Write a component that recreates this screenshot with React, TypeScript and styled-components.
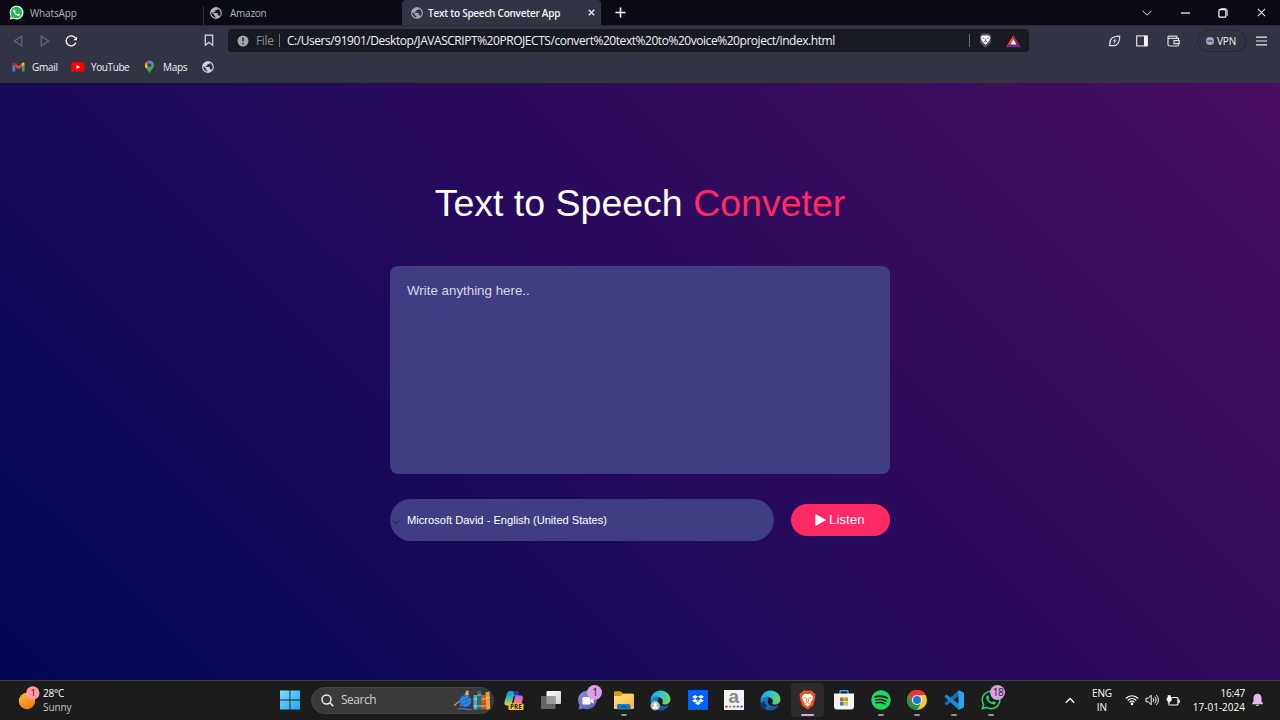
import React from "react";
import styled, { createGlobalStyle } from "styled-components";
import { FaWhatsapp, FaSpotify, FaDropbox } from "react-icons/fa";
import { MdPublic } from "react-icons/md";

const GlobalStyle = createGlobalStyle`
  * { box-sizing: border-box; }
  html, body { margin: 0; padding: 0; }
  body {
    width: 1280px;
    height: 720px;
    overflow: hidden;
    font-family: "Open Sans", "Noto Sans", sans-serif;
  }
  svg { display: block; flex: none; }
`;

const Desktop = styled.div`
  display: flex;
  flex-direction: column;
  width: 1280px;
  height: 720px;
  overflow: hidden;
`;

/* ---------- Browser chrome ---------- */

const TabStrip = styled.div`
  display: flex;
  flex: none;
  height: 25px;
  background: #0b0b16;
`;

const Tab = styled.div<{ $active?: boolean; $width: number; $divider?: boolean }>`
  display: flex;
  align-items: center;
  width: ${(p) => p.$width}px;
  height: 25px;
  padding-left: ${(p) => (p.$divider ? 9 : 8)}px;
  gap: 5px;
  border-radius: ${(p) => (p.$active ? "4px 4px 0 0" : "0")};
  background: ${(p) => (p.$active ? "#323443" : "transparent")};
  color: ${(p) => (p.$active ? "#f4f4f8" : "#b4b4bb")};
  background-image: ${(p) =>
    p.$divider ? "linear-gradient(#33343f, #33343f)" : "none"};
  background-repeat: no-repeat;
  background-size: 1px 19px;
  background-position: 0 6px;
`;

const Label = styled.span<{
  $size: number;
  $spacing?: number;
  $weight?: number;
  $color?: string;
}>`
  font-size: ${(p) => p.$size}px;
  letter-spacing: ${(p) => p.$spacing ?? 0}px;
  font-weight: ${(p) => p.$weight ?? 400};
  color: ${(p) => p.$color ?? "inherit"};
  line-height: 14px;
  white-space: nowrap;
`;

const TabClose = styled.span`
  display: flex;
  margin-left: auto;
  margin-right: 6px;
`;

const NewTab = styled.div`
  display: flex;
  align-items: center;
  justify-content: center;
  width: 38px;
`;

const WindowControls = styled.div`
  display: flex;
  align-items: center;
  margin-left: auto;
`;

const Cell = styled.div<{ $width: number }>`
  display: flex;
  align-items: center;
  justify-content: center;
  flex: none;
  width: ${(p) => p.$width}px;
`;

const Toolbar = styled.div`
  display: flex;
  align-items: center;
  flex: none;
  height: 30px;
  padding-left: 5px;
  background: #323443;
  border-top: 1px solid #272834;
`;

const BookmarkToggle = styled.div`
  display: flex;
  justify-content: center;
  width: 20px;
  margin-left: 114px;
  margin-right: 9px;
`;

const AddressBar = styled.div`
  display: flex;
  align-items: center;
  width: 801px;
  height: 23px;
  padding: 0 3px 0 9px;
  border-radius: 4px;
  background: #181a21;
`;

const Scheme = styled.div`
  display: flex;
  align-items: center;
  flex: none;
  width: 42px;
  gap: 7px;
`;

const BarRule = styled.span`
  width: 1px;
  height: 13px;
  background: #6d6f79;
`;

const ShieldArea = styled.div`
  display: flex;
  align-items: center;
  margin-left: auto;
`;

const Extensions = styled.div`
  display: flex;
  align-items: center;
  margin-left: 73px;
`;

const VpnPill = styled.div`
  display: flex;
  align-items: center;
  gap: 3px;
  width: 50px;
  height: 22px;
  margin-left: 5px;
  padding-left: 8px;
  border: 1px solid #262733;
  border-radius: 11px;
  background: #31333f;
`;

const BookmarkBar = styled.div`
  display: flex;
  flex: none;
  height: 28px;
  padding: 5px 0 0 12px;
  background: #323443;
  color: #f0f0f4;
`;

const Bookmark = styled.div<{ $width: number }>`
  display: flex;
  align-items: center;
  height: 14px;
  width: ${(p) => p.$width}px;
`;

const BookmarkIcon = styled.span<{ $width: number }>`
  display: flex;
  width: ${(p) => p.$width}px;
`;

/* ---------- Page ---------- */

const Page = styled.main`
  display: flex;
  flex-direction: column;
  align-items: center;
  flex: 1;
  background: linear-gradient(45deg, #010758, #490d61);
  font-family: "Liberation Sans", Arial, sans-serif;
  color: #fff;
`;

const Title = styled.h1`
  margin: 99px 0 0;
  font-size: 37.5px;
  font-weight: 400;
  line-height: 43px;
  white-space: nowrap;

  span {
    color: #ff2963;
  }
`;

const TextArea = styled.textarea`
  display: block;
  width: 500px;
  height: 208px;
  margin: 41px 0 25px;
  padding: 17px;
  border: 0;
  outline: 0;
  border-radius: 8px;
  resize: none;
  background: #403d84;
  color: #fff;
  font: 13.33px/16px "Liberation Sans", Arial, sans-serif;

  &::placeholder {
    color: #d9d8e8;
    opacity: 1;
  }
`;

const Controls = styled.div`
  display: flex;
  align-items: center;
  gap: 17px;
  width: 500px;
`;

const VoiceSelect = styled.div`
  display: flex;
  align-items: center;
  flex: 1;
  height: 42px;
  padding-left: 2px;
  gap: 7px;
  border-radius: 21px;
  background: #403d84;
  font-size: 11.11px;
  white-space: nowrap;

  svg {
    margin-top: 3px;
  }
`;

const ListenButton = styled.button`
  display: flex;
  align-items: center;
  width: 99px;
  height: 32px;
  padding: 0 0 0 24px;
  gap: 3px;
  border: 0;
  border-radius: 16px;
  background: #ff2963;
  color: #fff;
  font: 13.33px/16px "Liberation Sans", Arial, sans-serif;
`;

/* ---------- Taskbar ---------- */

const Taskbar = styled.footer`
  display: flex;
  flex: none;
  height: 40px;
  padding-bottom: 1px;
  border-top: 1px solid #3d3b48;
  background: #1c1c1c;
  color: #fff;
`;

const Weather = styled.div`
  display: flex;
  align-items: center;
  width: 275px;
  padding-left: 17px;
  gap: 3px;

  svg {
    margin-top: -5px;
  }
`;

const Stack = styled.div<{ $align: string }>`
  display: flex;
  flex-direction: column;
  align-items: ${(p) => p.$align};
`;

const SearchBox = styled.div`
  display: flex;
  align-items: center;
  align-self: center;
  width: 183px;
  height: 27px;
  margin: 0 2px 0 6px;
  padding: 0 2px 0 9px;
  border: 1px solid #454545;
  border-radius: 14px;
  background: #3a3a3a;

  > span {
    margin: 0 auto 0 7px;
  }
`;

const AppSlot = styled.div`
  display: flex;
  justify-content: center;
  align-items: center;
  flex: none;
  position: relative;
  width: 36.65px;
  height: 38px;
`;

const AppTile = styled.div<{ $active?: boolean }>`
  display: flex;
  align-items: center;
  justify-content: center;
  width: 33px;
  height: 34px;
  border-radius: 4px;
  background: ${(p) => (p.$active ? "#2b2b2b" : "transparent")};
`;

const RunMark = styled.span<{ $active?: boolean }>`
  position: absolute;
  bottom: 3px;
  width: ${(p) => (p.$active ? 13 : 6)}px;
  height: 2.5px;
  border-radius: 2px;
  background: ${(p) => (p.$active ? "#dba4e0" : "#929292")};
`;

const Badge = styled.span`
  position: absolute;
  top: 4px;
  right: 3.5px;
  width: 15px;
  height: 15px;
  border-radius: 50%;
  background: #d9a0e3;
  color: #1d1420;
  font-size: 10px;
  line-height: 15px;
  letter-spacing: -0.4px;
  text-align: center;
`;

const Tray = styled.div`
  display: flex;
  align-items: center;
  margin-left: auto;
  padding-right: 16px;
`;

const Clock = styled.div`
  display: flex;
  flex-direction: column;
  align-items: flex-end;
  width: 61px;
  margin-right: 6px;
`;

/* ---------- Icons ---------- */

const line = { fill: "none", stroke: "#dcdde4", strokeWidth: 1.2 } as const;

const WhatsAppTabIcon = () => (
  <svg width="17" height="16" viewBox="0 0 17 16">
    <path d="M1.700 14.600 2.700 11.200A6.900 6.900 0 1 1 5.400 13.700Z" fill="#fff" />
    <path d="M3 13.200 3.700 11A5.800 5.800 0 1 1 5.500 12.600Z" fill="#20b954" />
    <path
      d="M6.200 4.200c-.8.3-1.200 1.200-.8 2.300.6 1.900 2.200 3.600 4.300 4.300 1.100.3 2.200-.3 2.400-1.300L10.300 8.500 9.400 9.400C8.400 9 7.500 8.200 7 7.200L7.700 6.300Z"
      fill="#fff"
    />
  </svg>
);

const CloseIcon = ({ size = 8, width = 1.5, color = "#e9e9ef" }) => (
  <svg width={size} height={size} viewBox="0 0 8 8">
    <path d="M.8.8 7.200 7.200M7.200.8.8 7.200" stroke={color} strokeWidth={width} />
  </svg>
);

const LionShield = () => (
  <svg width="13" height="15" viewBox="0 0 13 15">
    <path d="M3.200.500h6.600l2.400 2.200-.4 7L6.500 14.500 1.200 9.700l-.4-7Z" fill="#565863" />
    <path
      d="M3.800 2.500h5.400L11.300 4 10.300 7.500 8.600 9.600 6.500 11.700 4.400 9.600 2.700 7.500 1.700 4Z"
      fill="#fff"
    />
    <path
      d="M3.400 4.800 5.400 5.700M9.600 4.800 7.600 5.700M6.500 6V8M4.900 8l1.600.9L8.100 8"
      fill="none"
      stroke="#565863"
      strokeWidth={0.9}
    />
  </svg>
);

const BatIcon = () => (
  <svg width="15" height="14" viewBox="0 0 15 14">
    <path d="M7.500.8 0 13.200 7.500 8Z" fill="#ff4724" />
    <path d="M7.500.8 15 13.200 7.500 8Z" fill="#9e1f63" />
    <path d="M0 13.200H15L7.500 8Z" fill="#662d91" />
    <path d="M7.500 5 10.300 10.400H4.700Z" fill="#fff" />
  </svg>
);

const GmailIcon = () => (
  <svg width="13" height="10" viewBox="0 0 13 10">
    <path d="M.5 1.500V9.500H3.200V4Z" fill="#4285f4" />
    <path d="M12.500 1.500V9.500H9.800V4Z" fill="#34a853" />
    <path d="M3.200 1.300 6.500 4 9.800 1.300V4.700L6.500 7.300 3.200 4.700Z" fill="#ea4335" />
    <path d="M.5 2.600V1.700C.5.3 2 0 3.200 1.200V4.700Z" fill="#c5221f" />
    <path d="M12.500 2.600V1.700C12.500.3 11 0 9.800 1.200V4.700Z" fill="#fbbc04" />
  </svg>
);

const YouTubeIcon = () => (
  <svg width="14" height="10" viewBox="0 0 14 10">
    <rect x=".3" y=".2" width="13.200" height="9.500" rx="2.200" fill="#f00" />
    <path d="M5.500 3 9.300 5 5.500 7Z" fill="#fff" />
  </svg>
);

const MapsIcon = () => (
  <svg width="11" height="14" viewBox="0 0 11 14">
    <path d="M5.500 13.500C4.900 10.500.9 8.800.9 5.300A4.600 4.600 0 0 1 10.100 5.300C10.100 8.800 6.100 10.500 5.500 13.500Z" fill="#34a853" />
    <path d="M2 8.400C1.300 7.400.9 6.500.9 5.300 .9 4.100 1.300 3.100 2 2.300L5.500 5.300Z" fill="#fbbc04" />
    <path d="M2 2.300A4.600 4.600 0 0 1 4.200.9L7 3.600 4 7Z" fill="#ea4335" />
    <path d="M4.100.9A4.600 4.600 0 0 1 9.200 2.600L6.200 6Z" fill="#4285f4" />
    <circle cx="5.500" cy="5.200" r="1.700" fill="#263c72" />
  </svg>
);

const WeatherIcon = () => (
  <svg width="23" height="27" viewBox="0 0 23 27">
    <defs>
      <linearGradient id="sun" x1="0" y1="0" x2=".6" y2="1">
        <stop offset="0" stopColor="#f9bd3b" />
        <stop offset="1" stopColor="#f07c13" />
      </linearGradient>
    </defs>
    <circle cx="10" cy="17" r="8.200" fill="url(#sun)" />
    <circle cx="15.800" cy="9" r="6.700" fill="#ff99a4" />
    <text x="13.500" y="12.400" fontSize="9.500" fill="#3a1d22">
      1
    </text>
  </svg>
);

const StartIcon = () => (
  <svg width="20" height="20" viewBox="0 0 20 20">
    <defs>
      <linearGradient id="win" x1="0" y1="0" x2="20" y2="20" gradientUnits="userSpaceOnUse">
        <stop offset="0" stopColor="#80e0ff" />
        <stop offset="1" stopColor="#1ca4f0" />
      </linearGradient>
    </defs>
    <path d="M0 .5H9.500V9.600H0ZM10.400.5H20V9.600H10.400ZM0 10.400H9.500V19.500H0ZM10.400 10.400H20V19.500H10.400Z" fill="url(#win)" />
  </svg>
);

const SearchArt = () => (
  <svg width="39" height="22" viewBox="-1 0 39 22">
    <path d="M1 16.500 16 5M7.500 17 14 1.500" stroke="#d59866" strokeWidth="1.100" />
    <circle cx="12.300" cy="12" r="6" fill="#2275d2" />
    <path d="M8 11 15 7M8.500 14 18 10M11 17 18 13" stroke="#5ba8f2" strokeWidth=".7" />
    <path d="M5 20.500C9 17.500 12 21.500 18.500 20.300" fill="none" stroke="#3d83d8" strokeWidth="1.200" />
    <path d="m12.500 5 2-3.500L16 2.500l-1.500 4" fill="#e8b185" />
    <rect x="20.500" y="6" width="3.800" height="14.500" fill="#52a9c9" />
    <rect x="24.300" y="2" width="4" height="18.500" fill="#256c7d" />
    <rect x="28.300" y="6" width="4.500" height="14.500" fill="#c8571f" />
    <path d="m32.500 3.500 4-1 .7 17.500-4 .7Z" fill="#f0a238" />
    <path d="M24.300 6h4M24.300 17h4M28.300 10h4.500M28.300 17h4.500M32.800 9l4-.5M20.500 10h3.800M20.500 17h3.800" stroke="#eddb9a" strokeWidth=".8" />
  </svg>
);

const CopilotIcon = () => (
  <svg width="20" height="20" viewBox="0 0 20 20" overflow="visible">
    <defs>
      <linearGradient id="cpA" x1="0" y1="0" x2="0" y2="1">
        <stop offset="0" stopColor="#1b8ef0" />
        <stop offset=".5" stopColor="#36bda2" />
        <stop offset="1" stopColor="#f0d02f" />
      </linearGradient>
      <linearGradient id="cpB" x1="0" y1="0" x2="0" y2="1">
        <stop offset="0" stopColor="#b16af0" />
        <stop offset=".5" stopColor="#f36a9a" />
        <stop offset="1" stopColor="#ff9657" />
      </linearGradient>
    </defs>
    <path d="M5.500 1H12C14 1 14.200 3 15 5.500L10.500 6 8.500 12C8 14.500 7 15.500 5 15.500H3C.5 15.500 0 13.500.7 11L3 3.500C3.500 2 4.200 1 5.500 1Z" fill="url(#cpA)" />
    <path d="M9 1h3.500c1.700 0 2 2 2.800 4.500h-5Z" fill="#173db7" />
    <path d="M12.500 5.500H16.500C19 5.500 19.300 7.500 18.700 9.500L17 15H8.500L11 7C11.300 6 11.800 5.500 12.500 5.500Z" fill="url(#cpB)" />
    <path d="M9.500 6.500 11.200 6 9.300 12.500 8 13Z" fill="#1c1c1c" />
    <rect x="4.500" y="13.500" width="15" height="6.500" rx="1" fill="#ffc51f" />
    <text x="6" y="19.100" fontSize="6.200" fontWeight="700" letterSpacing=".2" fill="#2c2105">
      PRE
    </text>
  </svg>
);

const TaskViewIcon = () => (
  <svg width="20" height="20" viewBox="0 0 20 20">
    <defs>
      <linearGradient id="tv" x1="0" y1="0" x2="1" y2="1">
        <stop offset="0" stopColor="#fff" />
        <stop offset="1" stopColor="#cfcfcf" />
      </linearGradient>
    </defs>
    <rect x="5.500" y="1" width="14.500" height="13" rx="1" fill="url(#tv)" />
    <rect x="0" y="6" width="14.500" height="13" rx="1" fill="#666" />
    <path d="M5.500 6h9v8h-9Z" fill="#9b9b9b" />
  </svg>
);

const ChatIcon = () => (
  <svg width="20" height="20" viewBox="0 0 20 20">
    <defs>
      <linearGradient id="ch" x1="0" y1="0" x2="1" y2="1">
        <stop offset="0" stopColor="#9591e8" />
        <stop offset="1" stopColor="#5059b9" />
      </linearGradient>
    </defs>
    <path d="M.5 19.500 1.500 15A9.300 9.300 0 1 1 5.500 18.500Z" fill="url(#ch)" />
    <rect x="4.500" y="7" width="8" height="7.500" rx="1.300" fill="#fff" />
    <path d="m12.700 9.700 3-2v6l-3-2Z" fill="#fff" />
  </svg>
);

const FolderIcon = () => (
  <svg width="20" height="20" viewBox="0 0 20 20">
    <defs>
      <linearGradient id="fo" x1="0" y1="0" x2="1" y2="1">
        <stop offset="0" stopColor="#ffe28a" />
        <stop offset="1" stopColor="#f5b92c" />
      </linearGradient>
    </defs>
    <path d="M0 2.500C0 1.500.7 1.200 1.500 1.200H6.500L9 3.500H18.500C19.500 3.500 20 4 20 5V8H0Z" fill="#d99813" />
    <path d="M0 6H6.500L9 4H18.500C19.500 4 20 4.500 20 5.500V18C20 18.700 19.500 19 19 19H1C.4 19 0 18.700 0 18Z" fill="url(#fo)" />
    <path d="M3 19.500V16C3 14.500 4 14 5 14H14.500C16 14 16.500 15 16.500 16V19.500Z" fill="#197bc2" />
    <path d="M6.500 16.700H13" stroke="#0c4e82" strokeWidth="1.200" />
  </svg>
);

const EdgeIcon = ({ id, profile }: { id: string; profile?: boolean }) => (
  <svg width="21" height="21" viewBox="0 0 21 21">
    <defs>
      <linearGradient id={id + "t"} x1="0" y1="0" x2="1" y2=".3">
        <stop offset="0" stopColor="#259fe2" />
        <stop offset=".6" stopColor="#39c6c4" />
        <stop offset="1" stopColor="#65d56d" />
      </linearGradient>
      <linearGradient id={id + "b"} x1="0" y1="0" x2="1" y2="1">
        <stop offset="0" stopColor="#1b8cd8" />
        <stop offset="1" stopColor="#114a8b" />
      </linearGradient>
    </defs>
    <path d="M.5 10.500C1 4 5.500.5 10.500.5 16.500.5 20.500 5 20.500 9.500 20.500 13 17.500 14.500 15 14.500 12.500 14.500 11.800 13.500 12.600 12.500 13.600 10 11.500 7 7.500 7 4 7 1.500 8.500.5 10.500Z" fill={`url(#${id}t)`} />
    <path d="M.5 10.500C1.500 8 4.500 6 7.800 6.500 10 7 8 8.500 7.800 11 7.500 15 12 17.800 19 15 17.500 18.500 14 20.500 10.500 20.500 5 20.500.5 16 .5 10.500Z" fill={`url(#${id}b)`} />
    {profile ? (
      <g>
        <circle cx="5.200" cy="15.800" r="4.700" fill="#b6b9bd" />
        <circle cx="5.200" cy="14.200" r="1.500" fill="#fff" />
        <path d="M2.500 18.500c0-3.200 5.400-3.200 5.400 0Z" fill="#fff" />
      </g>
    ) : (
      <path d="m0 15 2.500-3 2-1.500.5 3.500 2 1-1.500 3.500H2Z" fill="#0a386f" />
    )}
  </svg>
);

const DropboxIcon = () => (
  <svg width="20" height="20" viewBox="0 0 20 20">
    <rect width="20" height="20" fill="#0061fe" />
    <g transform="translate(4 4)">
      <FaDropbox size={12} color="#fff" />
    </g>
  </svg>
);

const AmazonIcon = () => (
  <svg width="20" height="20" viewBox="0 0 20 20" overflow="visible">
    <rect width="20" height="20" fill="#f2f2f2" />
    <text x="4.600" y="13" fontSize="19" fontWeight="700" fill="#888" fontFamily="Liberation Sans, sans-serif">
      a
    </text>
    {["#e22c2c", "#e8862a", "#4ba64a", "#2b7cd3", "#8a41b0"].map((c, i) => (
      <circle key={c} cx={2.5 + i * 3.8} cy="16.600" r="1.200" fill={c} />
    ))}
  </svg>
);

const BraveIcon = () => (
  <svg width="17" height="20" viewBox="0 0 17 20">
    <path d="M4.500.5h8L14.500 2.500 16.500 4 16 9 14 15.500 8.500 19.500 3 15.500 1 9 .5 4 2.500 2.500Z" fill="#f4501e" />
    <path d="M5.500 3.800 8.500 4.300 11.500 3.800 14 6.500 13.300 10 11.500 12.800V14.200L8.500 16.500 5.500 14.200V12.800L3.700 10 3 6.500Z" fill="#fff" />
    <path
      d="M4.800 7.500 7.300 8.300M12.200 7.500 9.700 8.300M7.600 8.500 7.300 11.200 8.500 12.200 9.700 11.200 9.400 8.500M6.300 13.600l2.200-1.100 2.200 1.100"
      fill="none"
      stroke="#f4501e"
      strokeWidth=".8"
    />
  </svg>
);

const StoreIcon = () => (
  <svg width="20" height="20" viewBox="0 0 20 20">
    <path d="M6 4V1.500C6 1 6.300.8 6.700.8H13.300C13.700.8 14 1 14 1.500V4" fill="none" stroke="#3da8e8" strokeWidth="1.400" />
    <path d="M0 3.500H20V16.500C20 18.500 19 19.500 17 19.500H3C1 19.500 0 18.500 0 16.500Z" fill="#f3f3f3" />
    <path d="M6 7.500h3.700v3.700H6Z" fill="#e8502a" />
    <path d="M10.300 7.500H14v3.700h-3.700Z" fill="#7cb51d" />
    <path d="M6 11.800h3.700v3.700H6Z" fill="#1a8fe0" />
    <path d="M10.300 11.800H14v3.700h-3.700Z" fill="#f5b81c" />
  </svg>
);

const ChromeIcon = () => (
  <svg width="20" height="20" viewBox="0 0 20 20">
    <circle cx="10" cy="10" r="10" fill="#fcc934" />
    <path d="M10 0A10 10 0 0 1 18.660 5H10L5.670 12.500 1.340 5A10 10 0 0 1 10 0Z" fill="#e33b2e" />
    <path d="M1.340 5 5.670 12.500 10 15 14.330 12.500 10 20A10 10 0 0 1 1.340 5Z" fill="#229342" />
    <circle cx="10" cy="10" r="5" fill="#fff" />
    <circle cx="10" cy="10" r="4" fill="#1a73e8" />
  </svg>
);

const VsCodeIcon = () => (
  <svg width="20" height="20" viewBox="0 0 20 20">
    <path d="M14.500.2 19 2.200V6.200L14.500 6.300 2.500 15.500.3 13.500Z" fill="#0b70bc" />
    <path d="M.3 6.500 2.500 4.500 14.500 13.700 19 13.800V17.800L14.500 19.800Z" fill="#1b87d4" />
    <path d="M14.500.2 20 2.700V17.300L14.500 19.800Z" fill="#2aa4ef" />
  </svg>
);

const RunningApp = ({
  children,
  active,
  running,
  badge,
}: {
  children: React.ReactNode;
  active?: boolean;
  running?: boolean;
  badge?: string;
}) => (
  <AppSlot>
    <AppTile $active={active}>{children}</AppTile>
    {(running || active) && <RunMark $active={active} />}
    {badge && <Badge>{badge}</Badge>}
  </AppSlot>
);

const BrowserTabs = () => (
  <TabStrip>
    <Tab $width={203}>
      <WhatsAppTabIcon />
      <Label $size={10} $spacing={-0.15}>WhatsApp</Label>
    </Tab>
    <Tab $width={199} $divider>
      <Cell $width={8}><MdPublic size={14} /></Cell>
      <Cell $width={0} />
      <Label $size={10} $spacing={-0.25}>Amazon</Label>
    </Tab>
    <Tab $width={199} $active>
      <Cell $width={13}><MdPublic size={14} color="#a3a5b0" /></Cell>
      <Label $size={10} $spacing={-0.25} $weight={600}>Text to Speech Conveter App</Label>
      <TabClose><CloseIcon size={7} /></TabClose>
    </Tab>
    <NewTab>
      <svg width="11" height="11" viewBox="0 0 11 11">
        <path d="M5.500.5v10M.5 5.500h10" stroke="#fff" strokeWidth="1.500" />
      </svg>
    </NewTab>
    <WindowControls>
      <Cell $width={38}>
        <svg width="10" height="6" viewBox="0 0 10 6"><path d="M.5.7 5 5.200 9.500.7" {...line} strokeWidth={1} /></svg>
      </Cell>
      <Cell $width={38}>
        <svg width="9" height="2" viewBox="0 0 9 2"><path d="M0 1h9" stroke="#fff" strokeWidth="1.200" /></svg>
      </Cell>
      <Cell $width={38}>
        <svg width="10" height="10" viewBox="0 0 10 10">
          <rect x=".9" y="1.700" width="7" height="7.500" rx="1.300" {...line} stroke="#fff" />
          <path d="M2.500.7H7.200C8.700.7 9.200 1.400 9.200 3V7.800" {...line} stroke="#fff" strokeWidth={0.9} />
        </svg>
      </Cell>
      <Cell $width={38}><CloseIcon size={9} width={0.9} /></Cell>
    </WindowControls>
  </TabStrip>
);

const BrowserToolbar = () => (
  <Toolbar>
    <Cell $width={26.67}>
      <svg width="10" height="12" viewBox="0 0 10 12"><path d="M8.800 1.200V10.800L1.200 6Z" {...line} stroke="#666873" /></svg>
    </Cell>
    <Cell $width={26.67}>
      <svg width="10" height="12" viewBox="0 0 10 12"><path d="M1.200 1.200V10.800L8.800 6Z" {...line} stroke="#666873" /></svg>
    </Cell>
    <Cell $width={26.67}>
      <svg width="13" height="12" viewBox="0 0 13 12">
        <path d="M10.300 3A5 5 0 1 0 10.800 7.800" {...line} stroke="#fff" strokeWidth={1.3} />
        <path d="M12 1.500V5.200H8.300Z" fill="#fff" />
      </svg>
    </Cell>
    <BookmarkToggle>
      <svg width="10" height="13" viewBox="0 0 10 13"><path d="M1.300 1.200H8.700V11.200L5 8.300 1.300 11.200Z" {...line} /></svg>
    </BookmarkToggle>
    <AddressBar>
      <Scheme>
        <svg width="12" height="12" viewBox="0 0 12 12">
          <circle cx="6" cy="6" r="5.500" fill="#a4a6b0" />
          <path d="M6 2.600v4M6 8v1.300" stroke="#181a21" strokeWidth="1.400" />
        </svg>
        <Label $size={12} $spacing={-0.3} $color="#8b8d97">File</Label>
      </Scheme>
      <BarRule />
      <Cell $width={7} />
      <Label $size={12} $color="#f2f3f6" $spacing={-0.45}>
        C:/Users/91901/Desktop/JAVASCRIPT%20PROJECTS/convert%20text%20to%20voice%20project/index.html
      </Label>
      <ShieldArea>
        <BarRule />
        <Cell $width={32}><LionShield /></Cell>
        <Cell $width={24}><BatIcon /></Cell>
      </ShieldArea>
    </AddressBar>
    <Extensions>
      <Cell $width={26}>
        <svg width="13" height="12" viewBox="0 0 13 12">
          <path d="M1 10.800C1.500 10 2 10.300 2 8.500 1.500 3 5.500 1.200 11.700 1.200 12 7 9.500 10.600 5.300 10.600H1" {...line} />
          <path d="M7.700 3 4.800 6.200H6.300L5.500 9 8.600 5.500H7Z" fill="#dcdde4" />
        </svg>
      </Cell>
      <Cell $width={28}>
        <svg width="12" height="12" viewBox="0 0 12 12">
          <rect x=".7" y=".9" width="10.600" height="10" {...line} />
          <path d="M8 1h3.500v10H8Z" fill="#f2f2f5" />
        </svg>
      </Cell>
      <Cell $width={36}>
        <svg width="13" height="12" viewBox="0 0 13 12">
          <path d="M1 1.200V9.500C1 10.500 1.500 11 2.500 11H10.500C11.300 11 11.500 10.500 11.500 9.800V3.300H1M1.200 1.200H9.800V3" {...line} />
          <rect x="7" y="5.600" width="5.200" height="3" {...line} fill="#323443" />
        </svg>
      </Cell>
      <VpnPill>
        <svg width="8" height="8" viewBox="0 0 8 8">
          <circle cx="4" cy="4" r="4" fill="#a2a6be" />
          <path d="M1.500 4h5" stroke="#41445a" strokeWidth="1.200" />
        </svg>
        <Label $size={10} $color="#eef0f6" $spacing={-0.1}>VPN</Label>
      </VpnPill>
      <Cell $width={30}>
        <svg width="11" height="10" viewBox="0 0 11 10"><path d="M0 1.200h11M0 5h11M0 8.800h11" {...line} stroke="#eee" /></svg>
      </Cell>
    </Extensions>
  </Toolbar>
);

const Bookmarks = () => (
  <BookmarkBar>
    <Bookmark $width={59}>
      <BookmarkIcon $width={20}><GmailIcon /></BookmarkIcon>
      <Label $size={10} $spacing={-0.25}>Gmail</Label>
    </Bookmark>
    <Bookmark $width={73}>
      <BookmarkIcon $width={20}><YouTubeIcon /></BookmarkIcon>
      <Label $size={10} $spacing={-0.4}>YouTube</Label>
    </Bookmark>
    <Bookmark $width={57}>
      <BookmarkIcon $width={19}><MapsIcon /></BookmarkIcon>
      <Label $size={10} $spacing={-0.3}>Maps</Label>
    </Bookmark>
    <Bookmark $width={14}><MdPublic size={14} color="#d3d4dc" /></Bookmark>
  </BookmarkBar>
);

const SystemTray = () => (
  <Tray>
    <Cell $width={26}>
      <svg width="10" height="7" viewBox="0 0 10 7"><path d="M.8 5.700 5 1.500 9.200 5.700" {...line} stroke="#fff" strokeWidth={1.3} /></svg>
    </Cell>
    <Cell $width={38}>
      <Stack $align="center">
        <Label $size={10} $spacing={-0.2}>ENG</Label>
        <Label $size={10}>IN</Label>
      </Stack>
    </Cell>
    <Cell $width={22}>
      <svg width="14" height="12" viewBox="0 0 14 12">
        <path d="M.8 4.500C4.200.8 9.800.8 13.200 4.500M2.700 6.500C5.200 3.800 8.800 3.800 11.300 6.500M4.500 8.400C6 7 8 7 9.500 8.400" {...line} stroke="#fff" />
        <circle cx="7" cy="9.900" r="1.300" fill="#fff" />
      </svg>
    </Cell>
    <Cell $width={18}>
      <svg width="14" height="12" viewBox="0 0 14 12">
        <path d="M1 4.200H3.200L6.200 1.300V10.700L3.200 7.800H1Z" {...line} stroke="#fff" strokeWidth={1} />
        <path d="M8 4.200C8.900 5.200 8.900 6.800 8 7.800M9.700 2.700C11.500 4.500 11.500 7.500 9.700 9.300M11.400 1.200C14 4 14 8 11.400 10.800" {...line} stroke="#fff" strokeWidth={1} />
      </svg>
    </Cell>
    <Cell $width={23}>
      <svg width="14" height="13" viewBox="0 0 14 13">
        <rect x="2.500" y="3.500" width="9.500" height="7.500" rx="1.300" {...line} stroke="#fff" />
        <path d="M12.300 5.800h1.500v3h-1.500Z" fill="#fff" />
        <path d="M1.500 1V3.500H.5V5.500C.5 7 1.500 7.800 2.300 8V11H3.800V8C5 7.800 5.900 7 5.900 5.500V3.500H5V1Z" fill="#fff" stroke="#1c1c1c" strokeWidth=".4" />
      </svg>
    </Cell>
    <Clock>
      <Label $size={10} $spacing={-0.2}>16:47</Label>
      <Label $size={10}>17-01-2024</Label>
    </Clock>
    <svg width="13" height="14" viewBox="0 0 13 14">
      <path d="M6.500.8C9 .8 10.500 2.800 10.500 5V8L11.800 10.500V11.200H1.200V10.500L2.500 8V5C2.500 2.800 4 .8 6.500.8Z" fill="#e9b7ee" />
      <path d="M4.700 11.800h3.600c-.4 1.600-3.200 1.600-3.600 0Z" fill="#e9b7ee" />
    </svg>
  </Tray>
);

export default function App() {
  return (
    <Desktop>
      <GlobalStyle />
      <BrowserTabs />
      <BrowserToolbar />
      <Bookmarks />
      <Page>
        <Title>
          Text to Speech <span>Conveter</span>
        </Title>
        <TextArea placeholder="Write anything here.." />
        <Controls>
          <VoiceSelect>
            <svg width="8" height="6" viewBox="0 0 8 6"><path d="M1 1.500 4.200 4.700 7.500 1.500" fill="none" stroke="#1c1a3e" strokeWidth="1" /></svg>
            Microsoft David - English (United States)
          </VoiceSelect>
          <ListenButton>
            <svg width="11" height="12" viewBox="0 0 11 12">
              <path d="M1 1 10 6 1 11Z" fill="#fff" stroke="#fff" strokeWidth="1.400" strokeLinejoin="round" />
            </svg>
            Listen
          </ListenButton>
        </Controls>
      </Page>
      <Taskbar>
        <Weather>
          <WeatherIcon />
          <Stack $align="flex-start">
            <Label $size={10} $spacing={-0.2}>28°C</Label>
            <Label $size={10} $spacing={-0.1} $color="#c4c4c4">Sunny</Label>
          </Stack>
        </Weather>
        <Cell $width={30}><StartIcon /></Cell>
        <SearchBox>
          <svg width="13" height="13" viewBox="0 0 13 13">
            <circle cx="5.500" cy="5.500" r="4.500" fill="none" stroke="#ededed" strokeWidth="1.400" />
            <path d="m8.800 8.800 3.500 3.500" stroke="#ededed" strokeWidth="1.600" />
          </svg>
          <Label $size={12} $spacing={-0.5} $color="#d0d0d0">Search</Label>
          <SearchArt />
        </SearchBox>
        <RunningApp><CopilotIcon /></RunningApp>
        <RunningApp><TaskViewIcon /></RunningApp>
        <RunningApp badge="1"><ChatIcon /></RunningApp>
        <RunningApp running><FolderIcon /></RunningApp>
        <RunningApp><EdgeIcon id="edgeProfile" profile /></RunningApp>
        <RunningApp><DropboxIcon /></RunningApp>
        <RunningApp><AmazonIcon /></RunningApp>
        <RunningApp><EdgeIcon id="edge" /></RunningApp>
        <RunningApp active><BraveIcon /></RunningApp>
        <RunningApp><StoreIcon /></RunningApp>
        <RunningApp running><FaSpotify size={20} color="#1ed760" /></RunningApp>
        <RunningApp running><ChromeIcon /></RunningApp>
        <RunningApp running><VsCodeIcon /></RunningApp>
        <RunningApp running badge="18"><FaWhatsapp size={22} color="#25d366" /></RunningApp>
        <SystemTray />
      </Taskbar>
    </Desktop>
  );
}
